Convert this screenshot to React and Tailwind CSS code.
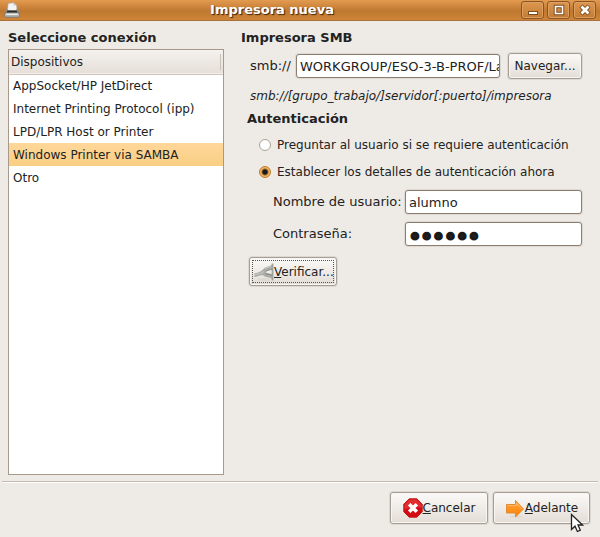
import React, { useState } from 'react'

const devices = [
  "AppSocket/HP JetDirect",
  "Internet Printing Protocol (ipp)",
  "LPD/LPR Host or Printer",
  "Windows Printer via SAMBA",
  "Otro"
]

const buttonStyle = "rounded-[3px] border border-[#a59e96] bg-linear-to-b from-[#fbfaf8] to-[#e4ddd6] shadow-[0_0_0_1px_#ddd8d1,inset_0_0_0_1px_#f8f6f3] whitespace-nowrap"
const fieldStyle = "h-6 min-w-0 rounded-[3px] border border-[#8c7f72] bg-white pl-[3px] shadow-[0_0_0_1px_#ddd8d1] outline-none"

function PrinterIcon() {
  return (
    <svg className="h-4 w-4" viewBox="0 0 16 16" aria-hidden="true">
      <path d="M3.500 8.500 4.200 1.500 9.500.8l3 2.400.5 5.300z" fill="#f4f4f2" stroke="#b5b0aa" strokeWidth=".6" />
      <path d="M9.500.8v2.800l3-.4z" fill="#c5c5c5" />
      <path d="M1.800 7h1.700l-.3 2.500h9.600L12.500 7h1.700l1 4.500H.8z" fill="#8a8a88" />
      <path d="M3.300 8.500h9.400l.7 2.600H2.600z" fill="#2a2a2a" />
      <rect x=".8" y="10.800" width="14.400" height="4.400" rx="1.200" fill="#d2d2d0" stroke="#6a6a68" strokeWidth=".8" />
      <path d="M2.500 12.300h11" stroke="#f5f5f3" />
      <path d="M2 14h12" stroke="#8c8c8a" />
    </svg>
  )
}

function PlugIcon() {
  return (
    <svg className="h-5 w-5 shrink-0" viewBox="0 0 20 20" aria-hidden="true">
      <ellipse cx="10" cy="17.500" rx="7" ry="1.800" fill="#ddd9d4" />
      <path d="M.5 11.200C5 11 7.500 9 10 6.500c2.500-2.300 5-1.500 8.500-4v4.500c-3.500 1.500-6 1-7.500 3 2 1.700 4.500.8 7.500 2.500v4.500c-3.500-2.500-7-1-9-3.500-3-1-6 1.500-9 1.500z" fill="#a9aca7" />
      <path d="M.5 12.300c4 0 7-.8 9.500-2.800M11 6.800c2-1.700 4.500-1.500 7-3" fill="none" stroke="#c9cbc7" />
      <path d="M11.500 9.700c2-1.700 4-1.700 6.500-2.400M11 11.500c2.500 1.200 4.500.8 7 2" fill="none" stroke="#858984" />
      <path d="M18.500 1.500v17" stroke="#9da09b" strokeWidth="1.800" />
    </svg>
  )
}

function CancelIcon() {
  return (
    <svg className="h-5 w-5 shrink-0" viewBox="0 0 20 20" aria-hidden="true">
      <path d="M6.200.8h7.600l5.400 5.400v7.600l-5.400 5.400H6.200L.8 13.800V6.200z" fill="#d40b12" stroke="#c01a1c" />
      <path d="M6.500 1.500h7l5 5v3.500c-5-2-11-1-17 1.500v-5z" fill="#ef5050" opacity=".5" />
      <path d="m6.200 6.200 7.600 7.600m0-7.600-7.600 7.600" stroke="#fff" strokeWidth="3.600" />
    </svg>
  )
}

function ForwardIcon() {
  return (
    <svg className="h-5 w-5 shrink-0" viewBox="0 0 20 20" aria-hidden="true">
      <defs>
        <linearGradient id="arrow" x1="0" y1="0" x2="0" y2="1">
          <stop stopColor="#ffa63d" />
          <stop offset="1" stopColor="#ff7f00" />
        </linearGradient>
      </defs>
      <ellipse cx="11" cy="18.500" rx="7" ry="1.200" fill="#ddd8d2" />
      <path d="M1.500 6.500H10.500V2.500l8 8.500-8 8V15h-9z" fill="url(#arrow)" stroke="#e08a35" strokeLinejoin="round" />
      <path d="M2.500 7.500h9V5l5.500 6" fill="none" stroke="#ffb764" />
    </svg>
  )
}

function TitleButton({ label, children }) {
  return (
    <button aria-label={label} className="flex h-[18px] w-[23px] items-center justify-center rounded-[3px] border border-[#8c5423] bg-linear-to-b from-[#dc9750] to-[#c37b32] shadow-[inset_0_0_0_1px_#dca063]">
      <svg className="h-3 w-3" viewBox="0 0 12 12" fill="none" stroke="#fff" aria-hidden="true">{children}</svg>
    </button>
  )
}

function TitleBar() {
  return (
    <header className="flex h-[21px] items-center border-b border-[#a8713d] bg-linear-to-b from-[#e39b50] via-[#bf7830] via-55% to-[#cf8538] px-1">
      <div className="w-6"><PrinterIcon /></div>
      <h1 className="flex-1 text-center text-[13px] leading-4 font-bold text-white [text-shadow:1px_1px_1px_#3f2207]">Impresora nueva</h1>
      <div className="flex w-20 justify-end gap-[3px]">
        <TitleButton label="Minimizar"><path d="M1 9h10" stroke="#7d4a1c" strokeWidth="4" /><path d="M2 9h8" strokeWidth="2" /></TitleButton>
        <TitleButton label="Maximizar"><path d="M2.500 2.500h7v7h-7z" stroke="#7d4a1c" strokeWidth="3.500" /><path d="M2.500 2.500h7v7h-7z" strokeWidth="1.600" /></TitleButton>
        <TitleButton label="Cerrar"><path d="m2 2 8 8m0-8-8 8" stroke="#7d4a1c" strokeWidth="4.500" /><path d="m2.500 2.500 7 7m0-7-7 7" strokeWidth="2.800" /></TitleButton>
      </div>
    </header>
  )
}

function DeviceList() {
  const [selected, setSelected] = useState(3)

  return (
    <section className="flex w-[216px] shrink-0 flex-col gap-px">
      <h2 className="text-[13px] leading-5 font-bold whitespace-nowrap">Seleccione conexión</h2>
      <div className="flex-1 border border-[#a8998b] bg-white">
        <table className="w-full border-collapse">
          <thead>
            <tr className="h-6 border-b border-[#cdc3b9] bg-linear-to-b from-[#f4f2ef] to-[#e6dfd9]">
              <th className="px-0.5 text-left font-normal">
                <div className="border-r border-[#c9c0b7]">Dispositivos</div>
              </th>
            </tr>
          </thead>
          <tbody>
            {devices.map((device, index) => (
              <tr
                key={device}
                onClick={() => setSelected(index)}
                className={selected === index ? "h-[23px] bg-linear-to-b from-[#ffd799] to-[#f9cf84]" : "h-[23px]"}
              >
                <td className="px-1 whitespace-nowrap">{device}</td>
              </tr>
            ))}
          </tbody>
        </table>
      </div>
    </section>
  )
}

function RadioRow({ id, label, checked, onChange }) {
  return (
    <div className="flex h-[27px] items-center gap-1.5">
      <input
        type="radio"
        id={id}
        name="auth"
        checked={checked}
        onChange={onChange}
        className="h-3 w-3 shrink-0 appearance-none rounded-full border border-[#aaa299] bg-white checked:border-[#b57a30] checked:bg-[radial-gradient(circle,#1a1a1a_0_2px,#fbb355_4px)]"
      />
      <label htmlFor={id} className="whitespace-nowrap">{label}</label>
    </div>
  )
}

function PrinterForm() {
  const [auth, setAuth] = useState("now")

  return (
    <section className="flex min-w-0 flex-1 flex-col">
      <h2 className="text-[13px] leading-5 font-bold">Impresora SMB</h2>
      <div className="mt-[5px] flex items-center pl-[9px] text-[13px]">
        <label htmlFor="uri" className="w-[46px] shrink-0">smb://</label>
        <input id="uri" defaultValue="WORKGROUP/ESO-3-B-PROF/La" className={`${fieldStyle} flex-1`} />
        <button className={`${buttonStyle} ml-2 h-[26px] w-[74px] shrink-0 text-[12px]`}>Navegar...</button>
      </div>
      <p className="mt-[7px] pl-[9px] leading-5 italic whitespace-nowrap">smb://[grupo_trabajo/]servidor[:puerto]/impresora</p>
      <h3 className="mt-[3px] pl-1.5 text-[13px] leading-5 font-bold">Autenticación</h3>
      <div className="mt-0.5 pl-[18px]">
        <RadioRow id="ask" label="Preguntar al usuario si se requiere autenticación" checked={auth === "ask"} onChange={() => setAuth("ask")} />
        <RadioRow id="now" label="Establecer los detalles de autenticación ahora" checked={auth === "now"} onChange={() => setAuth("now")} />
      </div>
      <div className="mt-[5px] grid grid-cols-[132px_1fr] items-center gap-y-2 pl-8 text-[13px]">
        <label htmlFor="user" className="whitespace-nowrap">Nombre de usuario:</label>
        <input id="user" defaultValue="alumno" className={fieldStyle} />
        <label htmlFor="password">Contraseña:</label>
        <input id="password" type="password" defaultValue="alumno" className={`${fieldStyle} pt-1 text-[20px] [-webkit-text-stroke:3px_#1a1a1a]`} />
      </div>
      <button className={`${buttonStyle} mt-[11px] ml-2 h-[29px] w-[88px] p-0.5`}>
        <span className="flex h-full items-center border border-dotted border-[#555] pl-px">
          <PlugIcon />
          <span><u>V</u>erificar...</span>
        </span>
      </button>
    </section>
  )
}

function Pointer() {
  return (
    <svg className="absolute top-5 left-[76px] h-5 w-[14px]" viewBox="0 0 14 20" aria-hidden="true">
      <path d="M1.500 1.500v15l3.500-3.300 2.400 5.300 2.900-1.300L8 12h4.500z" fill="#fff" stroke="#222" strokeWidth="1.300" />
    </svg>
  )
}

export default function App() {
  return (
    <div className="flex min-h-screen flex-col bg-[#eeebe6] font-['DejaVu_Sans',sans-serif] text-[12px] leading-4 text-[#222]">
      <TitleBar />
      <main className="flex flex-1 gap-[17px] pt-[7px] pr-[18px] pb-1.5 pl-2">
        <DeviceList />
        <PrinterForm />
      </main>
      <footer className="mx-0.5 flex justify-end gap-[5px] border-t border-[#c6b9ae] px-2 pt-2.5 pb-[13px] shadow-[inset_0_1px_0_#fff]">
        <button className={`${buttonStyle} flex h-8 w-[98px] items-center justify-center`}>
          <CancelIcon />
          <span><u>C</u>ancelar</span>
        </button>
        <button className={`${buttonStyle} relative flex h-8 w-[97px] items-center justify-center`}>
          <ForwardIcon />
          <span><u>A</u>delante</span>
          <Pointer />
        </button>
      </footer>
    </div>
  )
}
